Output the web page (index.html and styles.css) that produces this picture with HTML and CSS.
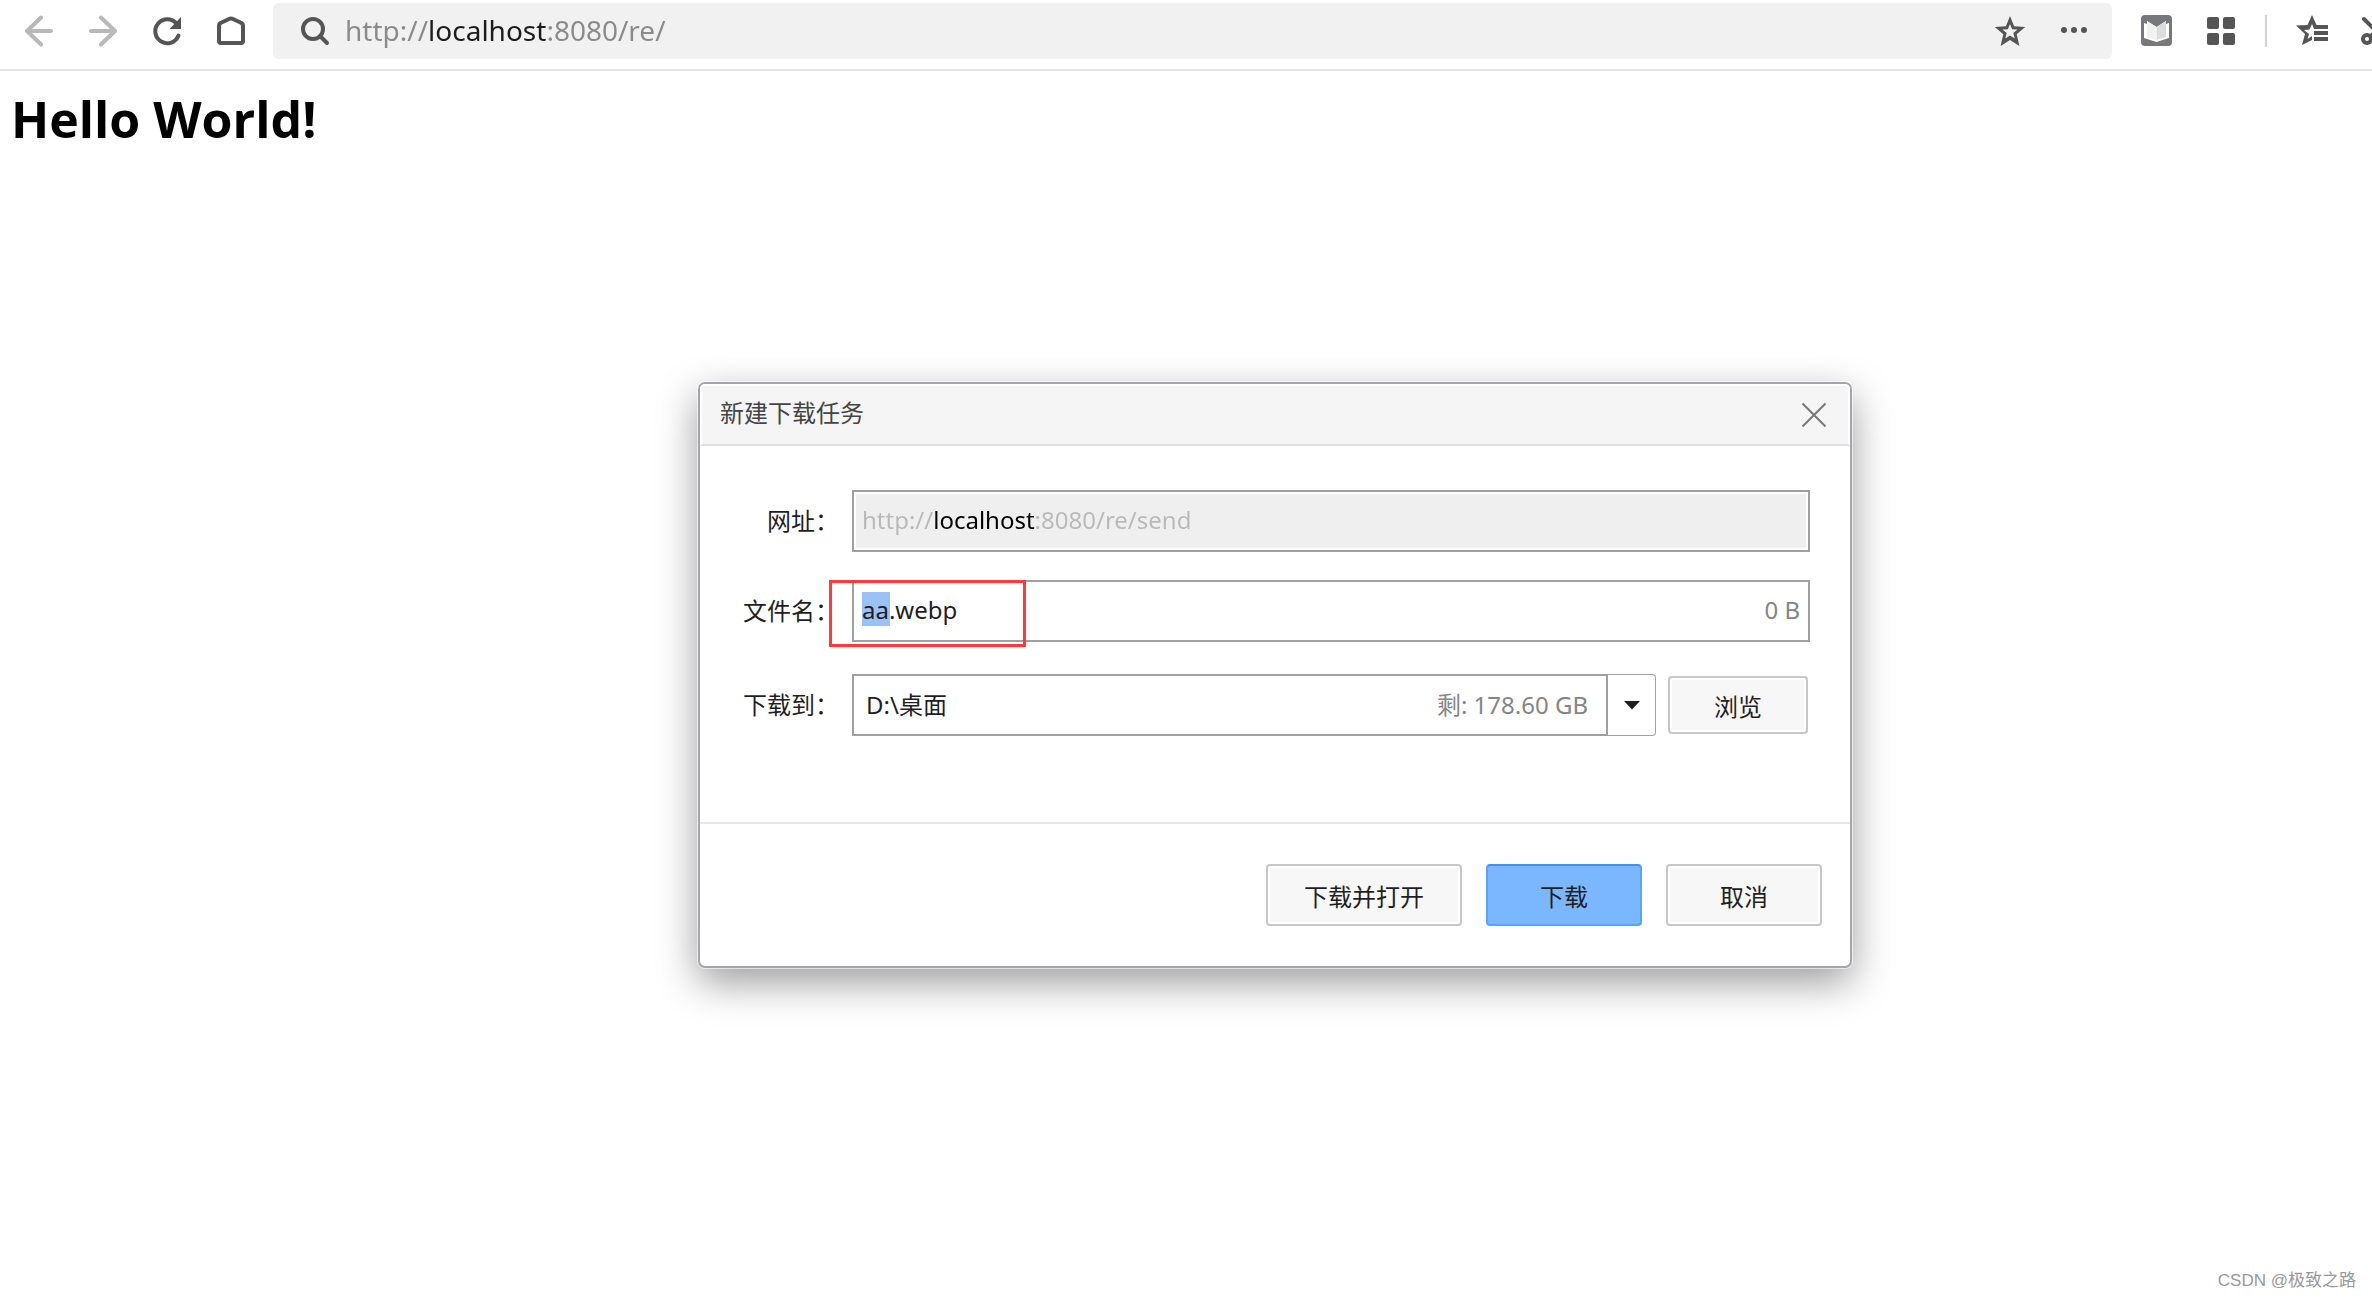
FILE: index.html
```html
<!DOCTYPE html>
<html lang="zh-CN">
<head>
<meta charset="utf-8">
<title>Hello World!</title>
<link rel="stylesheet" href="styles.css">
</head>
<body>
<header class="toolbar">
  <nav class="tools">
    <button class="tool tool-disabled" aria-label="后退"><svg width="32" height="32" viewBox="0 0 32 32"><path d="M28 16H4M18 2.500L4 16l14 13.500"/></svg></button>
    <button class="tool tool-disabled" aria-label="前进"><svg width="32" height="32" viewBox="0 0 32 32"><path d="M4 16h24M14 2.500L28 16 14 29.500"/></svg></button>
    <button class="tool" aria-label="刷新"><svg width="32" height="32" viewBox="0 0 32 32"><path d="M25.500 8.500A12 12 0 1 0 27.500 20.500"/><path class="solid" d="M30 2v12H18.500z"/></svg></button>
    <button class="tool" aria-label="主页"><svg width="32" height="32" viewBox="0 0 32 32"><path d="M4 10.500Q4 9 5.500 8L14 4q2-1 4 0l8.500 4Q28 9 28 10.500V26q0 2-2 2H6q-2 0-2-2z"/></svg></button>
  </nav>
  <div class="address">
    <svg class="search-icon" width="32" height="32" viewBox="0 0 32 32"><circle cx="14" cy="14" r="10"/><path d="M21 21l7 7"/></svg>
    <input class="address-input" type="text" aria-label="地址" value="http://localhost:8080/re/">
    <button class="tool" aria-label="收藏"><svg width="32" height="32" viewBox="0 0 32 32"><path class="solid" fill-rule="evenodd" d="M16 1L20.100 11.300 31.200 12.100 22.700 19.200 25.400 31 16 25 6.600 31 9.300 19.200.8 12.100 11.900 11.300zM16 9L13.900 14.200 8.400 14.500 12.700 18.100 11.300 23.500 16 20.500 20.700 23.500 19.300 18.100 23.600 14.500 18.100 14.200z"/></svg></button>
    <button class="tool" aria-label="更多"><svg width="32" height="32" viewBox="0 0 32 32"><g class="solid"><circle cx="6" cy="15" r="3"/><circle cx="16" cy="15" r="3"/><circle cx="26" cy="15" r="3"/></g></svg></button>
  </div>
  <div class="tools tools-end">
    <button class="tool" aria-label="阅读模式"><svg class="reader" width="32" height="32" viewBox="0 0 32 32"><rect x="1" y="0" width="31" height="31" rx="4" fill="#77787d"/><path fill="#fff" d="M4 8l3 1V6l9.500 6L26 6v3l3-1v15l-12.500 4L4 23z"/><path fill="#dcdcdd" d="M16.500 12L26 6v16l-9.500 3z"/><path fill="#f1f1f1" d="M7 6l9.500 6v13L7 22z"/></svg></button>
    <button class="tool" aria-label="扩展"><svg width="32" height="32" viewBox="0 0 32 32"><g class="solid"><rect x="3" y="2" width="12" height="12" rx="2"/><rect x="19" y="2" width="12" height="12" rx="2"/><rect x="3" y="18" width="12" height="12" rx="2"/><rect x="19" y="18" width="12" height="12" rx="2"/></g></svg></button>
    <span class="separator"></span>
    <button class="tool" aria-label="收藏夹"><svg width="32" height="32" viewBox="0 0 32 32"><path class="solid" d="M16 0l4.500 10H32v4H18l-2-5-2.500 5.500L8 15l5 4-1.500 5 4.500-3v4l-10 5 3-11L0 10.500l11.500-.5z"/><path class="solid" d="M18 16h14v4H18zM18 22h14v4H18z"/></svg></button>
    <button class="tool" aria-label="截图"><svg width="32" height="32" viewBox="0 0 32 32"><path d="M4 4l17 17M28 4L11 21"/><circle cx="7" cy="24" r="4"/><circle cx="25" cy="24" r="4"/></svg></button>
  </div>
</header>
<main class="page">
  <h1 class="title">Hello World!</h1>
</main>
<section class="dialog" role="dialog" aria-labelledby="dialog-title">
  <div class="dialog-head">
    <h2 class="dialog-title" id="dialog-title">新建下载任务</h2>
    <button class="close" aria-label="关闭"><svg width="26" height="26" viewBox="0 0 26 26"><path d="M1.500 1.500l23 23M24.500 1.500l-23 23"/></svg></button>
  </div>
  <form class="fields">
    <div class="row">
      <label class="label" for="url">网址：</label>
      <div class="box box-readonly"><input class="text url-text" id="url" type="text" readonly value="http://localhost:8080/re/send"></div>
    </div>
    <div class="row">
      <label class="label" for="name">文件名：</label>
      <div class="box"><input class="text name-text" id="name" type="text" value="aa.webp"><span class="note">0 B</span></div>
      <span class="marker"></span>
    </div>
    <div class="row">
      <label class="label" for="folder">下载到：</label>
      <div class="box box-folder"><input class="text folder-text" id="folder" type="text" value="D:\桌面"><span class="note">剩: 178.60 GB</span></div>
      <button class="drop" type="button" aria-label="选择文件夹"><svg width="16" height="9" viewBox="0 0 16 9"><path d="M0 0h16L8 8.500z"/></svg></button>
      <button class="button button-browse" type="button">浏览</button>
    </div>
  </form>
  <div class="actions">
    <button class="button button-wide">下载并打开</button>
    <button class="button button-primary">下载</button>
    <button class="button">取消</button>
  </div>
</section>
<footer class="credit">CSDN @极致之路</footer>
</body>
</html>
```
FILE: styles.css
```css
* { box-sizing: border-box; }

body {
  margin: 0;
  min-height: 100vh;
  display: flex;
  flex-direction: column;
  position: relative;
  background: #fff;
  color: #1f1f23;
  font-family: "Noto Sans", "Noto Sans CJK SC", sans-serif;
  font-size: 24px;
}

button, input { font: inherit; color: inherit; }
button { padding: 0; border: 0; background: none; }
svg { display: block; flex: none; }

.toolbar {
  display: flex;
  height: 71px;
  padding: 3px 0 10px 7px;
  border-bottom: 2px solid #e2e5e9;
}
.tools { display: flex; flex: none; align-items: center; }
.tools-end { width: 248px; margin-left: 12px; overflow: hidden; }
.tool { display: flex; flex: none; align-items: center; justify-content: center; width: 64px; height: 56px; }
.tool svg, .search-icon { fill: none; stroke: #555; stroke-width: 4; stroke-linecap: round; stroke-linejoin: round; }
.tool-disabled svg { stroke: #b9b9b9; }
.tool .solid { fill: #555; stroke: none; }
.tool .reader { stroke: none; }
.separator { flex: none; width: 2px; height: 32px; margin: 0 13px; background: #d3d3d3; }

.address {
  flex: 1;
  display: flex;
  align-items: center;
  margin-left: 10px;
  padding: 0 6px 0 26px;
  border-radius: 6px;
  background: #f1f1f1;
}
.address-input {
  flex: 1;
  min-width: 0;
  height: 44px;
  margin-left: 14px;
  padding: 0 0 2px;
  border: 0;
  font-size: 28px;
  color: transparent;
  background: linear-gradient(90deg, #8a8a8a 83px, #1c1c1c 83px 202px, #8a8a8a 202px);
  background-clip: text;
  -webkit-background-clip: text;
}

.page { padding: 15px 11px; }
.title { margin: 0; color: #000; font-family: "Open Sans", sans-serif; font-size: 50px; line-height: 66px; font-weight: 700; }

.dialog {
  position: absolute;
  top: 382px;
  left: 698px;
  width: 1154px;
  border: 2px solid #a3a5aa;
  border-radius: 7px;
  background: #fff;
  box-shadow: 0 0 0 1px rgba(255, 255, 255, .6), 0 14px 40px rgba(0, 0, 0, .4);
}
.dialog-head {
  display: flex;
  align-items: center;
  justify-content: space-between;
  height: 62px;
  padding: 0 21px 0 18px;
  border: 2px solid #fff;
  border-bottom-color: #dedede;
  border-radius: 5px 5px 0 0;
  background: #f5f5f5;
}
.dialog-title { margin: 0; padding-bottom: 4px; color: #444; font-size: 24px; line-height: 36px; font-weight: 400; }
.close svg { fill: none; stroke: #777; stroke-width: 2; }

.fields { display: grid; gap: 28px; padding: 44px 40px 86px 32px; }
.row { position: relative; display: flex; align-items: center; }
.row:last-child { margin-top: 4px; }
.label { width: 120px; padding: 0 13px 3px 0; text-align: right; white-space: nowrap; }
.box {
  flex: 1;
  display: flex;
  align-items: center;
  height: 62px;
  padding: 0 8px 4px;
  border: 2px solid #a0a0a0;
  background: #fff;
}
.box-readonly { background: #efefef; box-shadow: inset 0 0 0 2px #fff; }
.box-folder { padding: 0 18px 4px 12px; }
.text { flex: 1; min-width: 0; height: 34px; padding: 0; border: 0; background: none; }
.url-text {
  color: transparent;
  background: linear-gradient(90deg, #b9b9b9 71px, #000 71px 173px, #b9b9b9 173px);
  background-clip: text;
  -webkit-background-clip: text;
}
.name-text { background: linear-gradient(#9bc2f7, #9bc2f7) 0 0 / 28px 34px no-repeat; }
.note { color: #858585; white-space: nowrap; }
.marker {
  position: absolute;
  top: 0;
  left: 97px;
  width: 197px;
  height: 67px;
  border: 3px solid #ff3939;
  pointer-events: none;
}
.drop {
  display: flex;
  align-items: center;
  justify-content: center;
  width: 48px;
  height: 62px;
  border: 1px solid #a0a0a0;
  border-left: 0;
  border-radius: 0 4px 4px 0;
}
.drop svg { fill: #1f1f23; }

.button {
  width: 156px;
  height: 62px;
  border: 2px solid #c8c8c8;
  border-radius: 4px;
  background: #f7f7f7;
  box-shadow: inset 0 0 0 2px #fff;
}
.button-browse { width: 140px; height: 58px; margin: 0 2px 0 12px; }
.button-wide { width: 196px; }
.button-primary { border-color: #58a3fb; border-top-color: #448ff0; background: #7ab7ff; box-shadow: none; }
.actions {
  display: flex;
  justify-content: flex-end;
  gap: 24px;
  padding: 40px 28px;
  border-top: 2px solid #e8e8e8;
}

.credit {
  margin-top: auto;
  padding: 0 16px 4px;
  color: #999;
  font-family: "Liberation Sans", "Noto Sans CJK SC", sans-serif;
  font-size: 17px;
  line-height: 28px;
  text-align: right;
}
```
